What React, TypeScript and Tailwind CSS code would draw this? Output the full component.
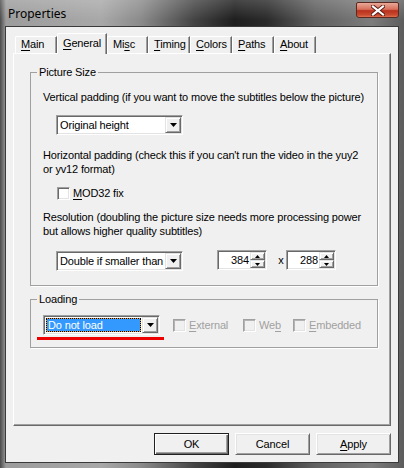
import React from "react";

const U = ({ children }: { children: React.ReactNode }) => (
  <span className="underline decoration-1 underline-offset-[2px]">{children}</span>
);

const raised =
  "border border-t-[#ffffff] border-l-[#ffffff] border-r-[#696969] border-b-[#696969] shadow-[inset_1px_1px_0_#e3e3e3,inset_-1px_-1px_0_#a0a0a0]";
const sunken =
  "border border-t-[#a0a0a0] border-l-[#a0a0a0] border-r-[#ffffff] border-b-[#ffffff] shadow-[inset_1px_1px_0_#696969,inset_-1px_-1px_0_#e3e3e3]";

function ArrowBtn() {
  return (
    <div
      className={`flex h-[16px] w-[16px] shrink-0 items-center justify-center bg-[#f0f0f0] border border-t-[#e3e3e3] border-l-[#e3e3e3] border-r-[#696969] border-b-[#696969] shadow-[inset_1px_1px_0_#ffffff,inset_-1px_-1px_0_#a0a0a0]`}
    >
      <svg width="7" height="4" viewBox="0 0 7 4">
        <polygon points="0,0 7,0 3.5,4" fill="#000" />
      </svg>
    </div>
  );
}

function Combo({ text, className = "", selected = false }: { text: string; className?: string; selected?: boolean }) {
  return (
    <div className={`flex h-[20px] shrink-0 bg-white p-[1px] ${sunken} ${className}`}>
      <div className="flex min-w-0 flex-1 items-stretch p-[1px]">
        {selected ? (
          <div className="flex flex-1 border border-dotted border-black bg-[#e8a030]">
            <div className="flex flex-1 items-center bg-[#3399ff] pl-[1px] text-white leading-[12px]">{text}</div>
          </div>
        ) : (
          <div className="flex flex-1 items-center pl-[1px] leading-[14px]">{text}</div>
        )}
      </div>
      <ArrowBtn />
    </div>
  );
}

function SpinHalf({ up }: { up?: boolean }) {
  return (
    <div
      className={`flex h-[8px] w-full items-center justify-center bg-[#f0f0f0] border border-t-[#e3e3e3] border-l-[#e3e3e3] border-r-[#696969] border-b-[#696969] shadow-[inset_1px_1px_0_#ffffff,inset_-1px_-1px_0_#a0a0a0]`}
    >
      <svg width="5" height="3" viewBox="0 0 5 3">
        <polygon points={up ? "2.5,0 5,3 0,3" : "0,0 5,0 2.5,3"} fill="#000" />
      </svg>
    </div>
  );
}

function Spin({ value }: { value: string }) {
  return (
    <div className={`flex h-[20px] w-[50px] shrink-0 bg-white p-[1px] ${sunken}`}>
      <div className="flex flex-1 items-center justify-end pr-[1px] leading-[14px]">{value}</div>
      <div className="flex w-[15px] flex-col">
        <SpinHalf up />
        <SpinHalf />
      </div>
    </div>
  );
}

function Check({ disabled = false }: { disabled?: boolean }) {
  return (
    <div
      className={
        disabled
          ? "h-[13px] w-[13px] shrink-0 bg-[#f0f0f0] border border-t-[#a0a0a0] border-l-[#a0a0a0] border-r-[#ffffff] border-b-[#ffffff] shadow-[inset_1px_1px_0_#b4b4b4,inset_-1px_-1px_0_#e3e3e3]"
          : `h-[13px] w-[13px] shrink-0 bg-white ${sunken}`
      }
    />
  );
}

function Tab({ children, className = "", selected = false }: { children: React.ReactNode; className?: string; selected?: boolean }) {
  return (
    <div
      className={`relative shrink-0 bg-[#f0f0f0] rounded-tl-[2px] border-t border-l border-r border-t-white border-l-white border-r-[#696969] shadow-[inset_-1px_0_0_#a0a0a0] pl-[5px] leading-[13px] ${
        selected ? "z-20 -mb-[1px] h-[21px] pt-[3px]" : "h-[17px] pt-[1px]"
      } ${className}`}
    >
      {children}
    </div>
  );
}

function Button({ children, def = false }: { children: React.ReactNode; def?: boolean }) {
  return (
    <div
      className={`flex h-[22px] w-[75px] items-center justify-center bg-[#f0f0f0] leading-[13px] ${
        def
          ? "border border-[#202020] shadow-[inset_1px_1px_0_#ffffff,inset_-1px_-1px_0_#696969,inset_-2px_-2px_0_#a0a0a0]"
          : raised
      }`}
    >
      {children}
    </div>
  );
}

export default function App() {
  return (
    <div className="relative flex h-[468px] w-[404px] flex-col overflow-hidden bg-[linear-gradient(180deg,rgba(255,255,255,0.18)_0px,rgba(255,255,255,0)_20px),linear-gradient(90deg,#4a4a4a_0px,#9c9c9c_6px,#a8a8a8_25%,#8a8a8a_35%,#444444_48%,#1e1e1e_58%,#2a2a2a_66%,#606060_78%,#7c7c7c_92%,#5c5c5c_100%)] font-['Liberation_Sans',Arial,sans-serif] text-[11px] tracking-[-0.15px] text-black">
      {/* Title bar */}
      <div className="flex h-[27px] shrink-0 items-start justify-between">
        <div className="pl-[8px] pt-[5px] font-['Noto_Sans',sans-serif] text-[12px] leading-[17px] tracking-normal text-black">
          Properties
        </div>
        <div className="mr-[5px] mt-[2px] flex h-[16px] w-[43px] items-center justify-center rounded-b-[3px] rounded-t-[2px] border border-[#5a2a20] bg-[linear-gradient(180deg,#e8a898_0%,#d8705c_45%,#b8301c_55%,#c84a30_85%,#e07050_100%)]">
          <svg width="14" height="11" viewBox="0 0 14 11">
            <path d="M2 1.5 L12 9.5 M12 1.5 L2 9.5" stroke="#5a1a10" strokeWidth="4" strokeLinecap="square" />
            <path d="M2 1.5 L12 9.5 M12 1.5 L2 9.5" stroke="#ffffff" strokeWidth="2.2" strokeLinecap="square" />
          </svg>
        </div>
      </div>

      {/* Client area */}
      <div className="mx-[6px] mb-[6px] flex flex-1 flex-col bg-[#f0f0f0] shadow-[0_0_0_1px_#3a3a3a]">
        {/* Tabs */}
        <div className="relative z-10 flex h-[26px] shrink-0 items-end pl-[9px]">
          <Tab className="w-[42px]">
            <U>M</U>ain
          </Tab>
          <Tab className="w-[50px]" selected>
            <U>G</U>eneral
          </Tab>
          <Tab className="w-[41px]">
            Mi<U>s</U>c
          </Tab>
          <Tab className="w-[42px]">
            <U>T</U>iming
          </Tab>
          <Tab className="w-[42px]">
            <U>C</U>olors
          </Tab>
          <Tab className="w-[42px]">
            <U>P</U>aths
          </Tab>
          <Tab className="w-[42px]">
            <U>A</U>bout
          </Tab>
        </div>

        {/* Pane */}
        <div className="mx-[7px] flex h-[373px] shrink-0 flex-col border border-t-white border-l-white border-r-[#696969] border-b-[#696969] shadow-[inset_-1px_-1px_0_#a0a0a0]">
          {/* Picture Size */}
          <fieldset className="ml-[16px] mt-[12px] w-[348px] border border-[#a0a0a0] shadow-[1px_1px_0_#ffffff]">
            <legend className="ml-[6px] px-[2px] leading-[13px]">Picture Size</legend>
            <div className="flex flex-col pl-[12px] pb-[14px]">
              <div className="mt-[11px] leading-[14px]">
                Vertical padding (if you want to move the subtitles below the picture)
              </div>
              <Combo text="Original height" className="ml-[13px] mt-[11px] w-[127px]" />
              <div className="mt-[13px] leading-[14px]">
                Horizontal padding (check this if you can't run the video in the yuy2
                <br />
                or yv12 format)
              </div>
              <div className="ml-[14px] mt-[10px] flex h-[14px] items-center gap-[3px]">
                <Check />
                <span className="leading-[14px]">
                  <U>M</U>OD32 fix
                </span>
              </div>
              <div className="mt-[10px] leading-[14px]">
                Resolution (doubling the picture size needs more processing power
                <br />
                but allows higher quality subtitles)
              </div>
              <div className="mt-[12px] flex items-start">
                <Combo text="Double if smaller than" className="ml-[13px] mt-[1px] w-[127px]" />
                <div className="ml-[34px]">
                  <Spin value="384" />
                </div>
                <div className="ml-[9px] w-[10px] text-center leading-[20px]">x</div>
                <div className="ml-[0px]">
                  <Spin value="288" />
                </div>
              </div>
            </div>
          </fieldset>

          {/* Loading */}
          <fieldset className="ml-[16px] mt-[7px] w-[348px] border border-[#a0a0a0] shadow-[1px_1px_0_#ffffff]">
            <legend className="ml-[6px] px-[2px] leading-[13px]">Loading</legend>
            <div className="flex flex-col pl-[12px] pb-[7px]">
              <div className="mt-[9px] flex items-center">
                <Combo text="Do not load" className="w-[117px]" selected />
                <div className="ml-[13px] flex w-[70px] items-center gap-[3px] text-[#a0a0a0]">
                  <Check disabled />
                  <span>
                    <U>E</U>xternal
                  </span>
                </div>
                <div className="flex w-[50px] items-center gap-[3px] text-[#a0a0a0]">
                  <Check disabled />
                  <span>
                    We<U>b</U>
                  </span>
                </div>
                <div className="flex items-center gap-[3px] text-[#a0a0a0]">
                  <Check disabled />
                  <span>
                    <U>E</U>mbedded
                  </span>
                </div>
              </div>
              <div className="-ml-[6px] mt-[2px] h-[3px] w-[127px] bg-[#ee0000]" />
            </div>
          </fieldset>
        </div>

        {/* Buttons */}
        <div className="mr-[7px] mt-[7px] flex justify-end gap-[6px]">
          <Button def>OK</Button>
          <Button>Cancel</Button>
          <Button>
            <U>A</U>pply
          </Button>
        </div>
      </div>
    </div>
  );
}
